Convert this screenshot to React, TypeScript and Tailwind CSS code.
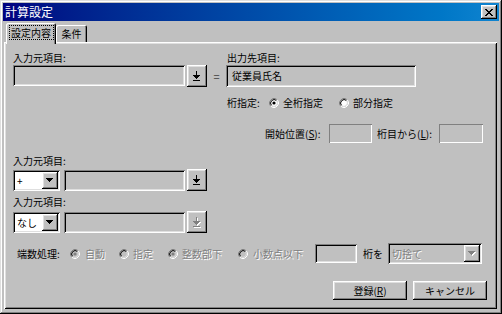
import React from "react";

const sunken =
  "shadow-[inset_1px_1px_0_#808080,inset_-1px_-1px_0_#fff,inset_2px_2px_0_#000,inset_-2px_-2px_0_#dfdfdf]";
const raised =
  "shadow-[inset_-1px_-1px_0_#000,inset_1px_1px_0_#fff,inset_-2px_-2px_0_#808080,inset_2px_2px_0_#dfdfdf]";
const thinSunken = "shadow-[inset_1px_1px_0_#808080,inset_-1px_-1px_0_#fff]";
const disabledText = "text-[#808080] [text-shadow:1px_1px_0_#fff]";

function Radio({ checked, disabled }: { checked?: boolean; disabled?: boolean }) {
  return (
    <svg width="10" height="10" viewBox="0 0 10 10" className="shrink-0">
      <circle cx="5" cy="5" r="3.6" fill={disabled ? "#c0c0c0" : "#fff"} />
      <path d="M1.82 8.18 A4.5 4.5 0 0 1 8.18 1.82" stroke="#808080" strokeWidth="1" fill="none" />
      <path d="M8.18 1.82 A4.5 4.5 0 0 1 1.82 8.18" stroke="#fff" strokeWidth="1" fill="none" />
      <path d="M2.53 7.47 A3.5 3.5 0 0 1 7.47 2.53" stroke="#000" strokeWidth="1" fill="none" />
      <path d="M7.47 2.53 A3.5 3.5 0 0 1 2.53 7.47" stroke="#dfdfdf" strokeWidth="1" fill="none" />
      {checked && <circle cx="5" cy="5" r="1.6" fill={disabled ? "#808080" : "#000"} />}
    </svg>
  );
}

function DownBarShape({ color, dx = 0, dy = 0 }: { color: string; dx?: number; dy?: number }) {
  return (
    <g fill={color} transform={`translate(${dx} ${dy})`}>
      <rect x="3" y="0" width="1" height="4" />
      <rect x="0" y="4" width="7" height="1" />
      <rect x="1" y="5" width="5" height="1" />
      <rect x="2" y="6" width="3" height="1" />
      <rect x="3" y="7" width="1" height="1" />
      <rect x="0" y="9" width="7" height="1" />
    </g>
  );
}

function DownBarIcon({ disabled }: { disabled?: boolean }) {
  return (
    <svg width="8" height="11" viewBox="0 0 8 11" shapeRendering="crispEdges">
      {disabled ? (
        <>
          <DownBarShape color="#fff" dx={1} dy={1} />
          <DownBarShape color="#808080" />
        </>
      ) : (
        <DownBarShape color="#000" />
      )}
    </svg>
  );
}

function ArrowShape({ color, dx = 0, dy = 0 }: { color: string; dx?: number; dy?: number }) {
  return (
    <g fill={color} transform={`translate(${dx} ${dy})`}>
      <rect x="0" y="0" width="7" height="1" />
      <rect x="1" y="1" width="5" height="1" />
      <rect x="2" y="2" width="3" height="1" />
      <rect x="3" y="3" width="1" height="1" />
    </g>
  );
}

function ComboArrow({ disabled }: { disabled?: boolean }) {
  return (
    <svg width="8" height="5" viewBox="0 0 8 5" shapeRendering="crispEdges">
      {disabled ? (
        <>
          <ArrowShape color="#fff" dx={1} dy={1} />
          <ArrowShape color="#808080" />
        </>
      ) : (
        <ArrowShape color="#000" />
      )}
    </svg>
  );
}

function PickButton({ disabled }: { disabled?: boolean }) {
  return (
    <div className={`w-[20px] h-[22px] bg-[#c0c0c0] flex items-center justify-center pt-[1px] ${raised}`}>
      <DownBarIcon disabled={disabled} />
    </div>
  );
}

function Combo({ text, w, disabled }: { text: string; w: string; disabled?: boolean }) {
  return (
    <div className={`${w} h-[21px] p-[2px] flex ${sunken} ${disabled ? "bg-[#c0c0c0]" : "bg-white"}`}>
      <div className={`flex-1 flex items-center pl-[2px] ${disabled ? disabledText : "text-black"}`}>{text}</div>
      <div className={`w-[16px] h-[17px] bg-[#c0c0c0] flex items-center justify-center ${raised}`}>
        <ComboArrow disabled={disabled} />
      </div>
    </div>
  );
}

function CloseIcon() {
  const cells: [number, number, number][] = [
    [0, 0, 2], [6, 0, 2],
    [1, 1, 2], [5, 1, 2],
    [2, 2, 4],
    [3, 3, 2],
    [2, 4, 4],
    [1, 5, 2], [5, 5, 2],
    [0, 6, 2], [6, 6, 2],
  ];
  return (
    <svg width="8" height="7" viewBox="0 0 8 7" shapeRendering="crispEdges">
      {cells.map(([x, y, w], i) => (
        <rect key={i} x={x} y={y} width={w} height="1" fill="#000" />
      ))}
    </svg>
  );
}

export default function App() {
  return (
    <div
      className={`w-[502px] h-[314px] bg-[#c0c0c0] p-[3px] flex flex-col text-[10px] leading-[12px] text-black font-['Noto_Sans_CJK_JP','Noto_Sans',sans-serif] shadow-[inset_-1px_-1px_0_#000,inset_1px_1px_0_#dfdfdf,inset_-2px_-2px_0_#808080,inset_2px_2px_0_#fff]`}
    >
      {/* Title bar */}
      <div className="h-[18px] shrink-0 flex items-center justify-between bg-linear-to-r from-[#000080] to-[#1084d0] pl-[2px] pr-[2px]">
        <span className="text-white text-[12px] leading-[14px]">計算設定</span>
        <div className={`w-[16px] h-[14px] bg-[#c0c0c0] flex items-center justify-center ${raised}`}>
          <CloseIcon />
        </div>
      </div>

      {/* Tabs */}
      <div className="h-[21px] shrink-0 flex items-end pl-[3px]">
        <div className="relative z-10 w-[50px] h-[21px] -mb-[2px] bg-[#c0c0c0] rounded-t-[2px] flex justify-center pt-[2px] shadow-[inset_1px_1px_0_#fff,inset_-1px_0_0_#000,inset_-2px_0_0_#808080]">
          <div className="w-[45px] h-[15px] border border-dotted border-black flex items-center justify-center">
            設定内容
          </div>
        </div>
        <div className="w-[31px] h-[17px] bg-[#c0c0c0] rounded-t-[2px] flex items-center justify-center shadow-[inset_1px_1px_0_#fff,inset_-1px_0_0_#000,inset_-2px_0_0_#808080]">
          条件
        </div>
      </div>

      {/* Panel */}
      <div className="flex-1 mb-[2px] ml-[1px] w-[493px] flex flex-col pl-[9px] pt-[10px] shadow-[inset_1px_1px_0_#fff,inset_-1px_-1px_0_#000,inset_2px_2px_0_#dfdfdf,inset_-2px_-2px_0_#808080]">
        {/* Row 1 labels */}
        <div className="h-[12px] flex">
          <div className="w-[214px]">入力元項目:</div>
          <div>出力先項目:</div>
        </div>
        {/* Row 2 */}
        <div className="mt-[1px] h-[22px] flex items-start">
          <div className={`w-[172px] h-[21px] bg-[#c0c0c0] ${sunken}`} />
          <div className="ml-[2px]">
            <PickButton />
          </div>
          <div className="ml-[6px] w-[7px] h-[22px] flex items-center justify-center text-[#404040] text-[11px]">=</div>
          <div className={`ml-[6px] w-[190px] h-[22px] bg-[#c0c0c0] flex items-center pl-[6px] ${sunken}`}>
            従業員氏名
          </div>
        </div>
        {/* Row 3 桁指定 */}
        <div className="mt-[10px] h-[12px] flex items-center pl-[214px]">
          <div className="w-[42px]">桁指定:</div>
          <div className="w-[70px] flex items-center">
            <Radio checked />
            <span className="ml-[4px]">全桁指定</span>
          </div>
          <div className="flex items-center">
            <Radio />
            <span className="ml-[4px]">部分指定</span>
          </div>
        </div>
        {/* Row 4 開始位置 */}
        <div className="mt-[15px] h-[19px] flex items-center pl-[252px]">
          <div className="w-[64px]">開始位置(<span className="underline">S</span>):</div>
          <div className={`w-[43px] h-[19px] bg-[#c0c0c0] ${thinSunken}`} />
          <div className="ml-[5px] w-[62px]">桁目から(<span className="underline">L</span>):</div>
          <div className={`w-[44px] h-[19px] bg-[#c0c0c0] ${thinSunken}`} />
        </div>
        {/* Row 5 label */}
        <div className="mt-[12px] h-[12px]">入力元項目:</div>
        {/* Row 6 */}
        <div className="mt-[2px] h-[22px] flex items-end">
          <Combo text="+" w="w-[47px]" />
          <div className={`ml-[4px] w-[121px] h-[21px] bg-[#c0c0c0] ${sunken}`} />
          <div className="ml-[2px]">
            <PickButton />
          </div>
        </div>
        {/* Row 7 label */}
        <div className="mt-[5px] h-[12px]">入力元項目:</div>
        {/* Row 8 */}
        <div className="mt-[3px] h-[22px] flex items-end">
          <Combo text="なし" w="w-[47px]" />
          <div className={`ml-[4px] w-[121px] h-[21px] bg-[#c0c0c0] ${sunken}`} />
          <div className="ml-[2px]">
            <PickButton disabled />
          </div>
        </div>
        {/* Row 9 端数処理 */}
        <div className="mt-[10px] h-[21px] flex items-center pl-[4px]">
          <div className="w-[53px]">端数処理:</div>
          <div className="w-[49px] flex items-center">
            <Radio checked disabled />
            <span className={`ml-[5px] ${disabledText}`}>自動</span>
          </div>
          <div className="w-[49px] flex items-center">
            <Radio disabled />
            <span className={`ml-[4px] ${disabledText}`}>指定</span>
          </div>
          <div className="w-[70px] flex items-center">
            <Radio checked disabled />
            <span className={`ml-[4px] ${disabledText}`}>整数部下</span>
          </div>
          <div className="w-[77px] flex items-center">
            <Radio disabled />
            <span className={`ml-[5px] ${disabledText}`}>小数点以下</span>
          </div>
          <div className={`w-[42px] h-[19px] bg-[#c0c0c0] ${sunken}`} />
          <div className="ml-[6px] w-[25px]">桁を</div>
          <Combo text="切捨て" w="w-[94px]" disabled />
        </div>
        {/* Row 10 buttons */}
        <div className="mt-[17px] h-[19px] flex pl-[320px]">
          <div className={`w-[74px] h-[19px] bg-[#c0c0c0] flex items-center justify-center ${raised}`}>
            登録(<span className="underline">R</span>)
          </div>
          <div className={`ml-[6px] w-[74px] h-[19px] bg-[#c0c0c0] flex items-center justify-center ${raised}`}>
            キャンセル
          </div>
        </div>
      </div>
    </div>
  );
}
